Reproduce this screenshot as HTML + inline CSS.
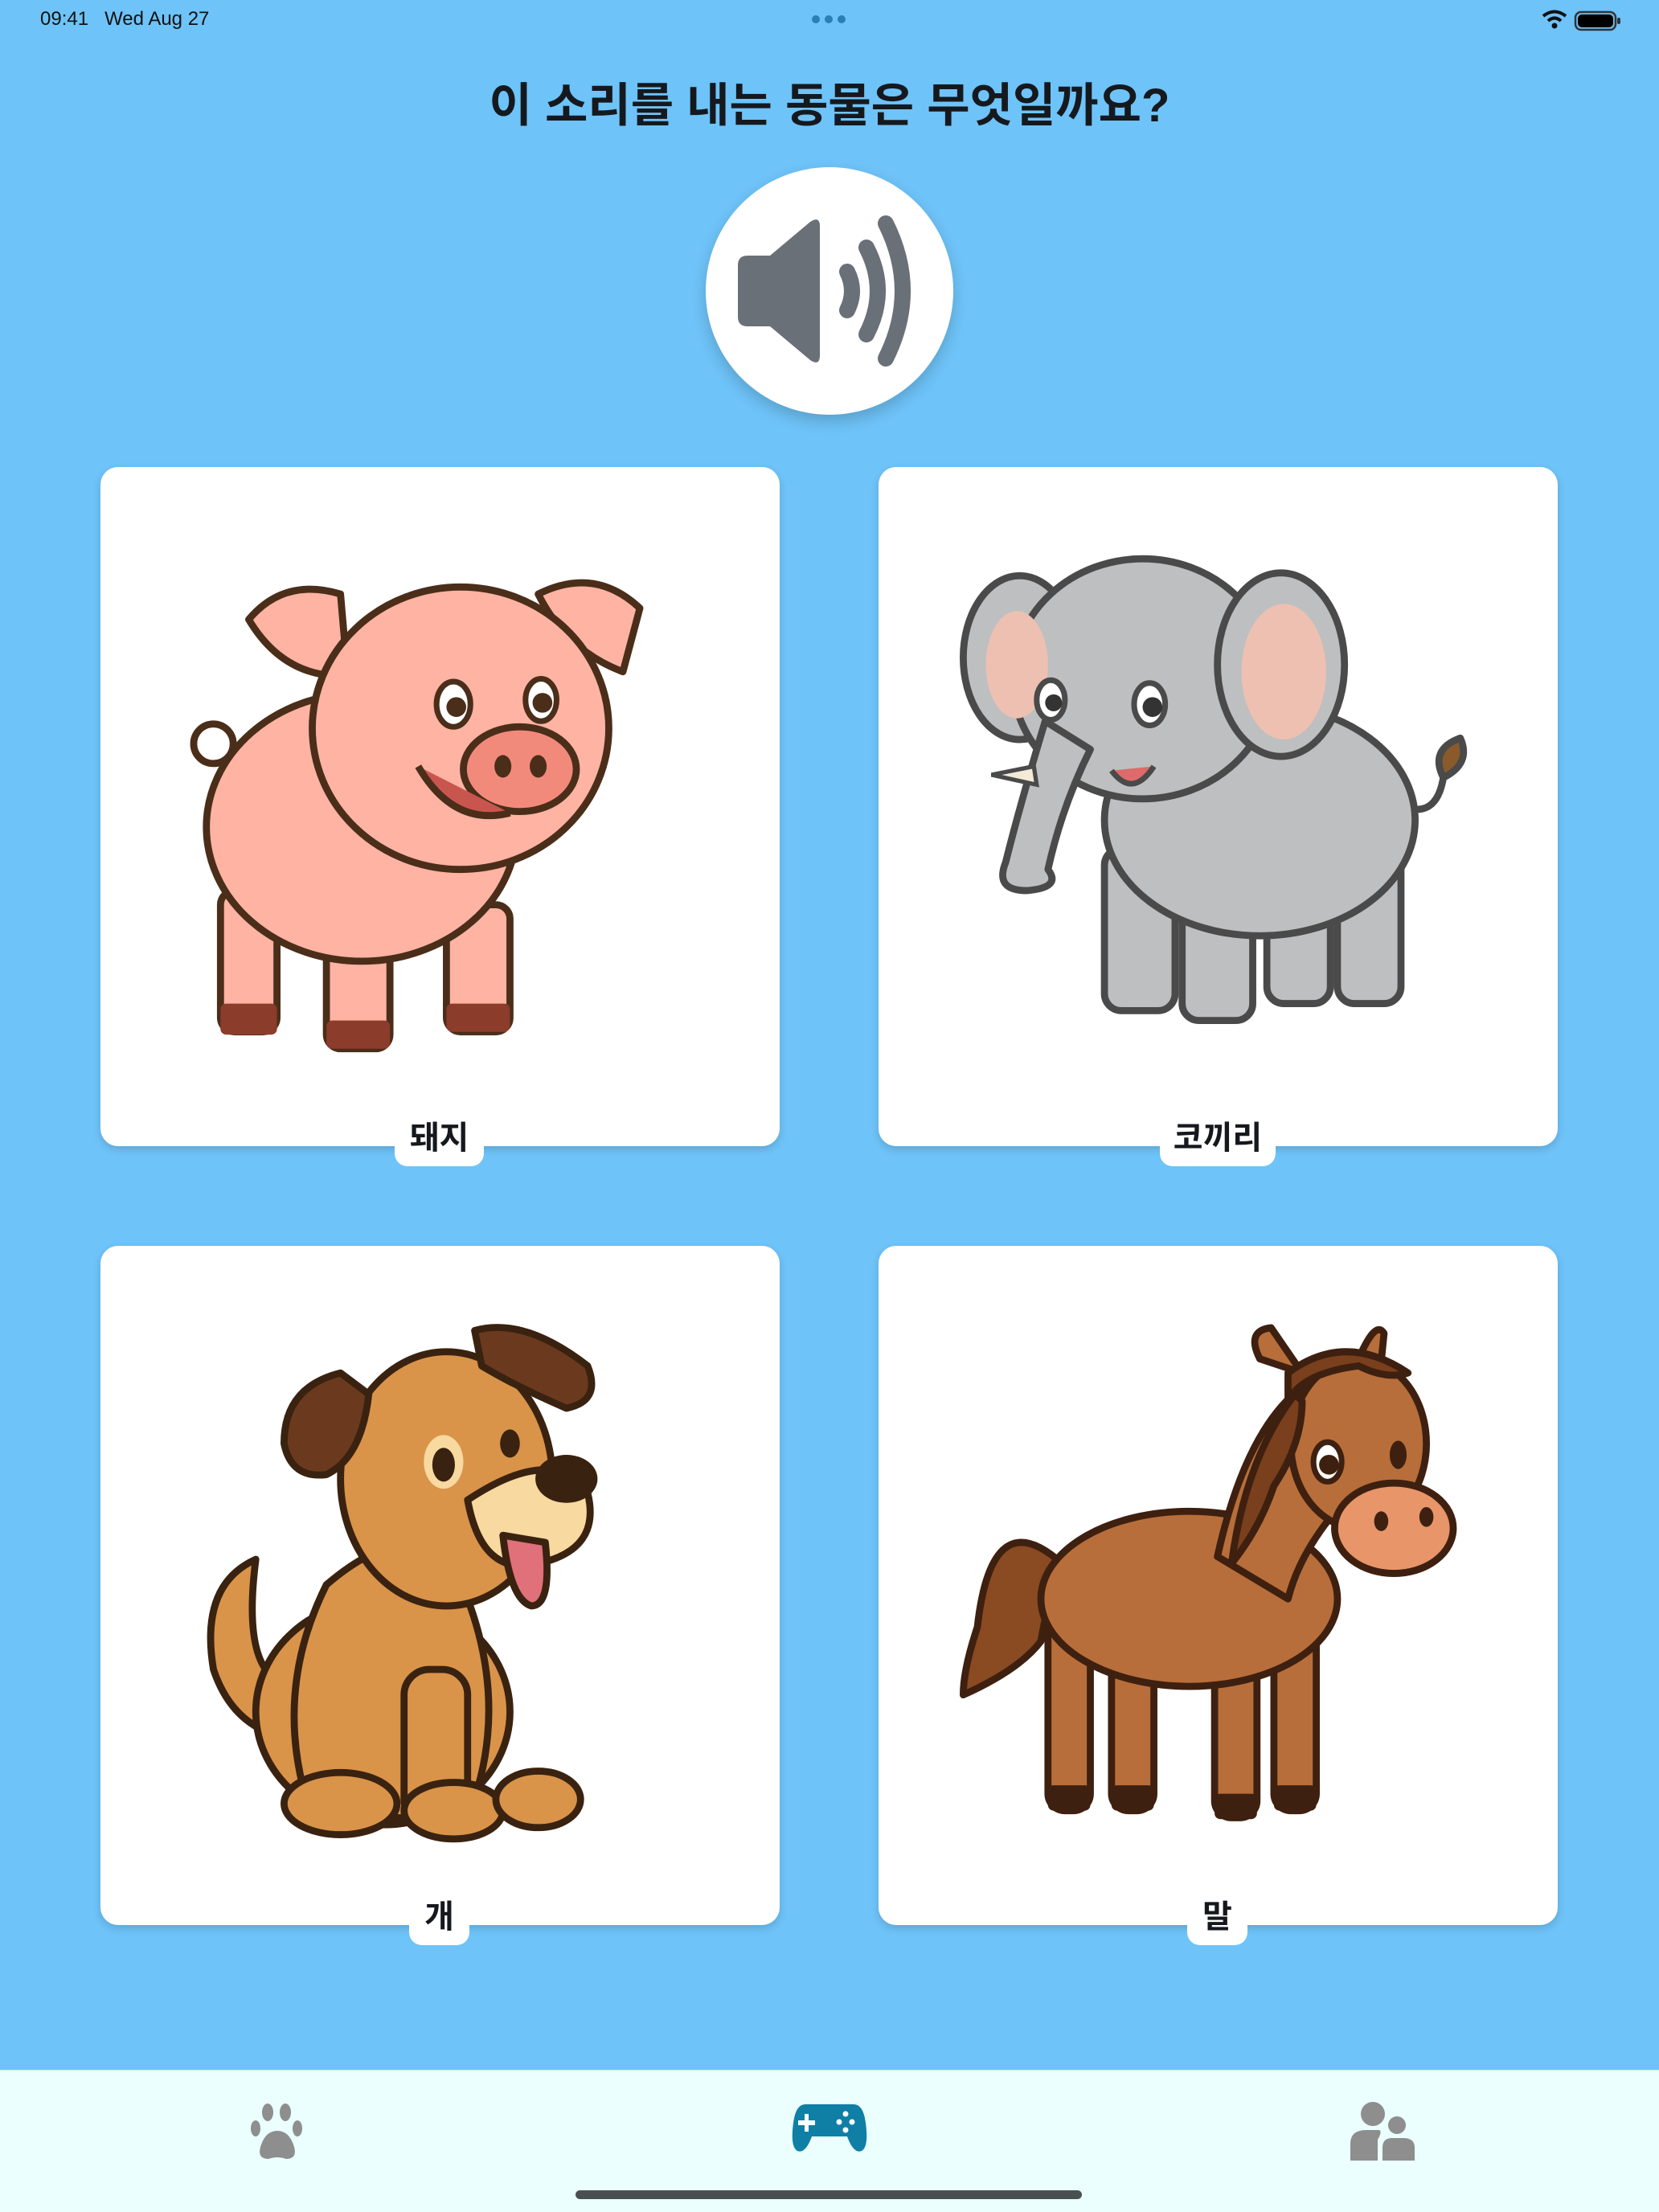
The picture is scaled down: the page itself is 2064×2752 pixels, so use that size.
<!DOCTYPE html>
<html><head><meta charset="utf-8"><style>
*{margin:0;padding:0;box-sizing:border-box}
body{width:2064px;height:2752px;background:#6ec3f8;position:relative;overflow:hidden;font-family:"Liberation Sans","Noto Sans CJK KR",sans-serif}
.sb{position:absolute;top:10px;font-size:24px;color:#111}
.title{position:absolute;top:84px;left:0;width:2064px;text-align:center;font-size:58px;font-weight:700;color:#15191e;letter-spacing:0px}
.spk{position:absolute;left:878px;top:208px;width:308px;height:308px;border-radius:50%;background:#fff;box-shadow:0 8px 18px rgba(0,0,0,.18)}
.card{position:absolute;width:845px;height:845px;background:#fff;border-radius:22px;box-shadow:0 4px 10px rgba(0,0,0,.15)}
.card svg{position:absolute;left:0;top:0;width:845px;height:845px}
.lab{position:absolute;top:806px;height:64px;background:#fff;border-radius:0 0 16px 16px;font-size:40px;font-weight:700;color:#15191e;text-align:center;line-height:58px}
.tab{position:absolute;left:0;top:2575px;width:2064px;height:177px;background:#eafffe;border-top:1px solid #cfe3e6}
.home{position:absolute;left:716px;top:2725px;width:630px;height:11px;border-radius:6px;background:#4a5050}
</style></head><body>
<div class="sb" style="left:50px">09:41&nbsp;&nbsp;&nbsp;Wed Aug 27</div>
<div style="position:absolute;left:1010px;top:19px;width:44px;height:10px">
<span style="position:absolute;left:0;width:10px;height:10px;border-radius:5px;background:#2a7fb5"></span>
<span style="position:absolute;left:16px;width:10px;height:10px;border-radius:5px;background:#2a7fb5"></span>
<span style="position:absolute;left:32px;width:10px;height:10px;border-radius:5px;background:#2a7fb5"></span></div>
<svg style="position:absolute;left:1918px;top:10px" width="100" height="30" viewBox="0 0 100 30">
<path d="M2 10 Q16 -1 30 10" stroke="#111" stroke-width="4" fill="none"/><path d="M8 16 Q16 9 24 16" stroke="#111" stroke-width="4" fill="none"/><circle cx="16" cy="22" r="3.5" fill="#111"/>
<rect x="42" y="5" width="50" height="22" rx="7" fill="none" stroke="#333" stroke-width="2.5"/><rect x="45" y="8" width="44" height="16" rx="5" fill="#000"/><rect x="94" y="12" width="4" height="8" rx="2" fill="#333"/></svg>
<div class="title">이 소리를 내는 동물은 무엇일까요?</div>
<div class="spk"><svg width="308" height="308" viewBox="0 0 308 308">
<path d="M40 122 Q40 110 52 110 H80 L130 68 Q142 60 142 74 V234 Q142 248 130 240 L80 198 H52 Q40 198 40 186 Z" fill="#6a7078"/>
<path d="M176 130 Q188 154 176 178" stroke="#6a7078" stroke-width="20" fill="none" stroke-linecap="round"/>
<path d="M200 100 Q228 154 200 208" stroke="#6a7078" stroke-width="20" fill="none" stroke-linecap="round"/>
<path d="M224 70 Q266 154 224 238" stroke="#6a7078" stroke-width="20" fill="none" stroke-linecap="round"/>
</svg></div>

<div class="card" style="left:125px;top:581px"><svg viewBox="0 0 481 481">
<g stroke="#4a2e1a" stroke-width="5" stroke-linejoin="round" fill="#ffb3a3">
<circle cx="80" cy="196" r="14" fill="none"/>
<rect x="85" y="300" width="40" height="100" rx="10"/><rect x="160" y="320" width="45" height="92" rx="10"/><rect x="245" y="310" width="45" height="90" rx="10"/>
<ellipse cx="185" cy="255" rx="110" ry="95"/>
<path d="M105 108 Q130 78 170 90 L175 148 Q130 150 105 108Z"/>
<path d="M310 90 Q350 70 382 100 L370 145 Q330 130 310 90Z"/>
<ellipse cx="255" cy="185" rx="105" ry="100"/>
<ellipse cx="297" cy="214" rx="40" ry="30" fill="#f28a7c"/>
<path d="M225 212 Q250 255 290 245" fill="#c9564e"/>
</g>
<g fill="#4a2e1a"><ellipse cx="285" cy="212" rx="6" ry="8"/><ellipse cx="310" cy="212" rx="6" ry="8"/>
<ellipse cx="250" cy="168" rx="12" ry="16" fill="#fff" stroke="#4a2e1a" stroke-width="4"/><circle cx="252" cy="170" r="7"/>
<ellipse cx="312" cy="165" rx="11" ry="15" fill="#fff" stroke="#4a2e1a" stroke-width="4"/><circle cx="313" cy="167" r="7"/>
<rect x="85" y="380" width="40" height="22" rx="4" fill="#8b3c2a"/><rect x="160" y="392" width="45" height="20" rx="4" fill="#8b3c2a"/><rect x="245" y="380" width="45" height="20" rx="4" fill="#8b3c2a"/></g>
</svg><div class="lab" style="left:366px;width:111px">돼지</div></div>

<div class="card" style="left:1093px;top:581px"><svg viewBox="0 0 481 481">
<g stroke="#4a4a4a" stroke-width="5" stroke-linejoin="round" fill="#bdbfc0">
<path d="M370 240 Q395 250 400 220 Q395 200 412 192" fill="none"/><path d="M400 220 Q390 200 412 192 Q420 210 400 220Z" fill="#8b5a2b"/>
<rect x="160" y="270" width="50" height="115" rx="12"/><rect x="215" y="280" width="50" height="112" rx="12"/><rect x="275" y="270" width="45" height="110" rx="12"/><rect x="325" y="260" width="45" height="120" rx="12"/>
<ellipse cx="270" cy="250" rx="110" ry="82"/>
<ellipse cx="100" cy="135" rx="40" ry="58"/>
<ellipse cx="187" cy="150" rx="92" ry="85"/>
<path d="M118 180 Q100 240 90 280 Q82 300 105 300 Q130 298 120 285 Q130 240 150 200Z"/>
<ellipse cx="285" cy="140" rx="45" ry="65"/>
</g>
<ellipse cx="287" cy="145" rx="30" ry="48" fill="#eec0b2"/><ellipse cx="98" cy="140" rx="22" ry="38" fill="#eec0b2"/>
<g fill="#333"><ellipse cx="122" cy="165" rx="10" ry="14" fill="#fff" stroke="#4a4a4a" stroke-width="4"/><circle cx="124" cy="167" r="6"/>
<ellipse cx="192" cy="168" rx="11" ry="15" fill="#fff" stroke="#4a4a4a" stroke-width="4"/><circle cx="194" cy="170" r="7"/></g>
<path d="M165 215 Q180 235 195 212" fill="#e06a6a" stroke="#4a4a4a" stroke-width="4"/>
<path d="M80 218 L110 212 L112 225 Z" fill="#f3ead7" stroke="#4a4a4a" stroke-width="3"/>
</svg><div class="lab" style="left:350px;width:144px">코끼리</div></div>

<div class="card" style="left:125px;top:1550px"><svg viewBox="0 0 481 481">
<g stroke="#3a2210" stroke-width="5" stroke-linejoin="round" fill="#d9944a">
<path d="M110 222 Q70 240 80 300 Q95 345 140 350 L130 310 Q100 300 110 222Z"/>
<ellipse cx="200" cy="330" rx="90" ry="80"/>
<path d="M160 240 Q230 180 260 250 Q290 330 260 405 H150 Q120 320 160 240Z"/>
<rect x="215" y="300" width="45" height="110" rx="18"/>
<ellipse cx="170" cy="395" rx="40" ry="22"/><ellipse cx="250" cy="400" rx="35" ry="20"/><ellipse cx="310" cy="392" rx="30" ry="20"/>
<ellipse cx="245" cy="165" rx="75" ry="90"/>
<path d="M260 180 Q320 140 345 175 Q355 215 310 225 Q270 235 260 180Z" fill="#f8d9a0"/>
<path d="M170 90 Q130 100 130 140 Q135 165 160 162 Q185 150 190 105Z" fill="#6b3a1e"/>
<path d="M265 60 Q300 50 345 85 Q355 110 330 115 Q295 100 270 85Z" fill="#6b3a1e"/>
<path d="M285 205 Q290 250 305 255 Q320 255 315 210Z" fill="#e0707a"/>
</g>
<ellipse cx="330" cy="165" rx="22" ry="17" fill="#3a2210"/>
<ellipse cx="243" cy="153" rx="14" ry="19" fill="#f8d9a0"/><ellipse cx="243" cy="155" rx="8" ry="12" fill="#3a2210"/>
<ellipse cx="290" cy="140" rx="7" ry="10" fill="#3a2210"/>
</svg><div class="lab" style="left:384px;width:75px">개</div></div>

<div class="card" style="left:1093px;top:1550px"><svg viewBox="0 0 481 481">
<g stroke="#3e2010" stroke-width="5" stroke-linejoin="round" fill="#b86e3a">
<path d="M130 225 Q80 180 70 270 Q60 300 60 318 Q100 300 115 280 Q120 250 130 225Z" fill="#8a4a22"/>
<rect x="120" y="260" width="30" height="140" rx="12"/><rect x="165" y="270" width="30" height="130" rx="12"/><rect x="238" y="270" width="30" height="135" rx="12"/><rect x="280" y="265" width="30" height="135" rx="12"/>
<ellipse cx="220" cy="250" rx="105" ry="62"/>
<path d="M240 220 Q260 130 300 100 L340 170 Q300 210 290 250Z"/>
<path d="M270 80 Q260 60 278 58 L300 90Z"/><path d="M340 80 Q352 52 358 62 L355 92Z"/>
<ellipse cx="340" cy="140" rx="48" ry="60"/>
<ellipse cx="365" cy="200" rx="42" ry="32" fill="#e8956a"/>
<path d="M290 90 Q330 60 375 90 Q360 95 340 85 Q300 90 290 110Z" fill="#7a3f1c"/>
<path d="M295 105 Q260 150 250 225 Q270 200 280 170 Q300 140 300 110Z" fill="#7a3f1c"/>
</g>
<g fill="#3e2010"><ellipse cx="318" cy="153" rx="10" ry="14" fill="#fff" stroke="#3e2010" stroke-width="4"/><circle cx="319" cy="155" r="7"/>
<ellipse cx="368" cy="148" rx="6" ry="10"/><ellipse cx="356" cy="195" rx="5" ry="7"/><ellipse cx="388" cy="192" rx="5" ry="7"/>
<rect x="120" y="382" width="30" height="18" rx="4"/><rect x="165" y="382" width="30" height="18" rx="4"/><rect x="238" y="388" width="30" height="18" rx="4"/><rect x="280" y="382" width="30" height="18" rx="4"/></g>
</svg><div class="lab" style="left:384px;width:75px">말</div></div>

<div class="tab">
<svg style="position:absolute;left:310px;top:40px" width="70" height="72" viewBox="0 0 70 72">
<g fill="#8e8e8e"><ellipse cx="23" cy="12" rx="7" ry="11"/><ellipse cx="45" cy="12" rx="7" ry="11"/><ellipse cx="8" cy="32" rx="6" ry="10"/><ellipse cx="60" cy="32" rx="6" ry="10"/>
<path d="M35 35 Q20 35 14 55 Q10 70 24 70 Q35 66 46 70 Q60 70 56 55 Q50 35 35 35Z"/></g></svg>
<svg style="position:absolute;left:984px;top:40px" width="96" height="62" viewBox="0 0 96 62">
<path d="M18 2 H78 Q90 2 93 25 Q97 55 88 60 Q78 64 70 42 H26 Q18 64 8 60 Q-1 55 3 25 Q6 2 18 2Z" fill="#0f7fa6"/>
<rect x="17" y="14" width="5" height="22" fill="#fff"/><rect x="9" y="22" width="21" height="6" fill="#fff"/>
<g fill="#fff"><circle cx="68" cy="14" r="3.5"/><circle cx="68" cy="34" r="3.5"/><circle cx="60" cy="24" r="3.5"/><circle cx="76" cy="24" r="3.5"/></g></svg>
<svg style="position:absolute;left:1678px;top:36px" width="84" height="76" viewBox="0 0 84 76">
<g fill="#8e8e8e"><circle cx="30" cy="18" r="15"/><circle cx="60" cy="32" r="11"/>
<path d="M2 76 V55 Q2 38 22 38 H38 Q42 40 36 50 V76Z"/><path d="M42 76 V60 Q42 48 54 48 H68 Q82 48 82 60 V76Z"/></g></svg>
</div>
<div class="home"></div>
</body></html>
